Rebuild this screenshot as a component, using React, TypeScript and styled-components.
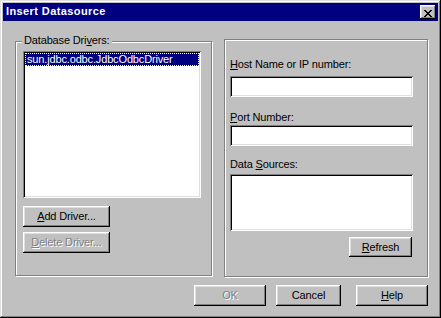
import React from "react";
import styled, { createGlobalStyle, css } from "styled-components";

const Global = createGlobalStyle`
  html, body { margin: 0; padding: 0; background: #c0c0c0; }
  body {
    font-family: "Liberation Sans", Arial, sans-serif;
    font-size: 11px;
    color: #000;
  }
  * { box-sizing: border-box; }
`;

const raised = css`
  box-shadow: inset -1px -1px #000, inset 1px 1px #fff, inset -2px -2px #808080,
    inset 2px 2px #dfdfdf;
`;

const sunken = css`
  box-shadow: inset 1px 1px #808080, inset -1px -1px #fff, inset 2px 2px #000,
    inset -2px -2px #dfdfdf;
`;

const Window = styled.div`
  width: 441px;
  height: 318px;
  background: #c0c0c0;
  padding: 3px;
  display: flex;
  flex-direction: column;
  box-shadow: inset -1px -1px #000, inset 1px 1px #dfdfdf, inset -2px -2px #808080,
    inset 2px 2px #fff;
`;

const TitleBar = styled.div`
  height: 18px;
  flex: none;
  background: #000080;
  display: flex;
  align-items: flex-start;
  justify-content: space-between;
  padding: 0 2px 0 3px;
`;

const TitleText = styled.span`
  margin-top: 2px;
  color: #fff;
  font-weight: bold;
  font-size: 11px;
  line-height: 13px;
  letter-spacing: 0.4px;
  white-space: nowrap;
`;

const CloseButton = styled.button`
  margin-top: 2px;
  width: 16px;
  height: 14px;
  padding: 3px 0 0 4px;
  border: 0;
  background: #c0c0c0;
  display: block;
  ${raised}
  svg { display: block; }
`;

const Body = styled.div`
  flex: 1;
  display: flex;
  flex-direction: column;
`;

const Groups = styled.div`
  display: flex;
  align-items: flex-start;
  padding-left: 12px;
`;

const Group = styled.div<{ $w: number; $h: number; $mt: number; $ml?: number; $pt: number; $pl: number }>`
  position: relative;
  flex: none;
  width: ${(p) => p.$w}px;
  height: ${(p) => p.$h}px;
  margin-top: ${(p) => p.$mt}px;
  margin-left: ${(p) => p.$ml ?? 0}px;
  padding: ${(p) => p.$pt}px 0 0 ${(p) => p.$pl}px;
  border: 1px solid #808080;
  box-shadow: inset 1px 1px #fff, 1px 1px #fff;
  display: flex;
  flex-direction: column;
  align-items: flex-start;
`;

const GroupLabel = styled.span`
  position: absolute;
  top: -8px;
  left: 6px;
  padding: 0 2px;
  background: #c0c0c0;
  line-height: 13px;
  letter-spacing: -0.15px;
  white-space: nowrap;
`;

const Key = styled.span`
  text-decoration: underline;
`;

const ListBox = styled.div<{ $w: number; $h: number; $mt?: number }>`
  width: ${(p) => p.$w}px;
  height: ${(p) => p.$h}px;
  margin-top: ${(p) => p.$mt ?? 0}px;
  background: #fff;
  padding: 2px;
  ${sunken}
`;

const ListItem = styled.div<{ $selected?: boolean }>`
  height: 13px;
  line-height: 11px;
  padding-left: 1px;
  white-space: nowrap;
  letter-spacing: -0.15px;
  ${(p) =>
    p.$selected
      ? css`
          background: #000080;
          color: #fff;
          border: 1px dotted #ffffc0;
        `
      : css`
          border: 1px solid transparent;
        `}
`;

const Field = styled.div<{ $mt: number }>`
  width: 183px;
  height: 21px;
  margin-top: ${(p) => p.$mt}px;
  background: #fff;
  ${sunken}
`;

const Label = styled.div<{ $mt?: number }>`
  margin-top: ${(p) => p.$mt ?? 0}px;
  line-height: 13px;
  letter-spacing: -0.15px;
  white-space: nowrap;
`;

const Button = styled.button<{ $w: number; $h?: number; $mt?: number; $ml?: number }>`
  flex: none;
  width: ${(p) => p.$w}px;
  height: ${(p) => p.$h ?? 21}px;
  margin-top: ${(p) => p.$mt ?? 0}px;
  margin-left: ${(p) => p.$ml ?? 0}px;
  padding: 0;
  border: 0;
  background: #c0c0c0;
  font-family: inherit;
  font-size: 11px;
  line-height: 13px;
  letter-spacing: -0.15px;
  color: #000;
  white-space: nowrap;
  ${raised}
  &:disabled {
    color: #808080;
    text-shadow: 1px 1px 0 #fff;
  }
`;

const Footer = styled.div`
  display: flex;
  align-items: flex-start;
  margin-top: 8px;
  padding-left: 191px;
`;

const CloseGlyph = () => (
  <svg width="8" height="7" viewBox="0 0 8 7" shapeRendering="crispEdges">
    <path
      fill="#000"
      d="M0 0h2v1h-2z M6 0h2v1h-2z M1 1h2v1h-2z M5 1h2v1h-2z M2 2h4v1h-4z M3 3h2v1h-2z M2 4h4v1h-4z M1 5h2v1h-2z M5 5h2v1h-2z M0 6h2v1h-2z M6 6h2v1h-2z"
    />
  </svg>
);

export default function App() {
  return (
    <>
      <Global />
      <Window>
        <TitleBar>
          <TitleText>Insert Datasource</TitleText>
          <CloseButton aria-label="Close">
            <CloseGlyph />
          </CloseButton>
        </TitleBar>
        <Body>
          <Groups>
            <Group $w={197} $h={235} $mt={20} $pt={9} $pl={7}>
              <GroupLabel>
                Database Dri<Key>v</Key>ers:
              </GroupLabel>
              <ListBox $w={178} $h={147}>
                <ListItem $selected>sun.jdbc.odbc.JdbcOdbcDriver</ListItem>
              </ListBox>
              <Button $w={87} $mt={8}>
                <Key>A</Key>dd Driver...
              </Button>
              <Button $w={87} $mt={5} disabled>
                <Key>D</Key>elete Driver...
              </Button>
            </Group>
            <Group $w={204} $h={238} $mt={18} $ml={12} $pt={18} $pl={5}>
              <Label>
                <Key>H</Key>ost Name or IP number:
              </Label>
              <Field $mt={5} />
              <Label $mt={14}>
                <Key>P</Key>ort Number:
              </Label>
              <Field $mt={1} />
              <Label $mt={12}>
                Data <Key>S</Key>ources:
              </Label>
              <ListBox $w={183} $h={57} $mt={3} />
              <Button $w={63} $h={20} $mt={6} $ml={119}>
                <Key>R</Key>efresh
              </Button>
            </Group>
          </Groups>
          <Footer>
            <Button $w={72} disabled>
              OK
            </Button>
            <Button $w={65} $ml={10}>
              Cancel
            </Button>
            <Button $w={72} $ml={15}>
              <Key>H</Key>elp
            </Button>
          </Footer>
        </Body>
      </Window>
    </>
  );
}
